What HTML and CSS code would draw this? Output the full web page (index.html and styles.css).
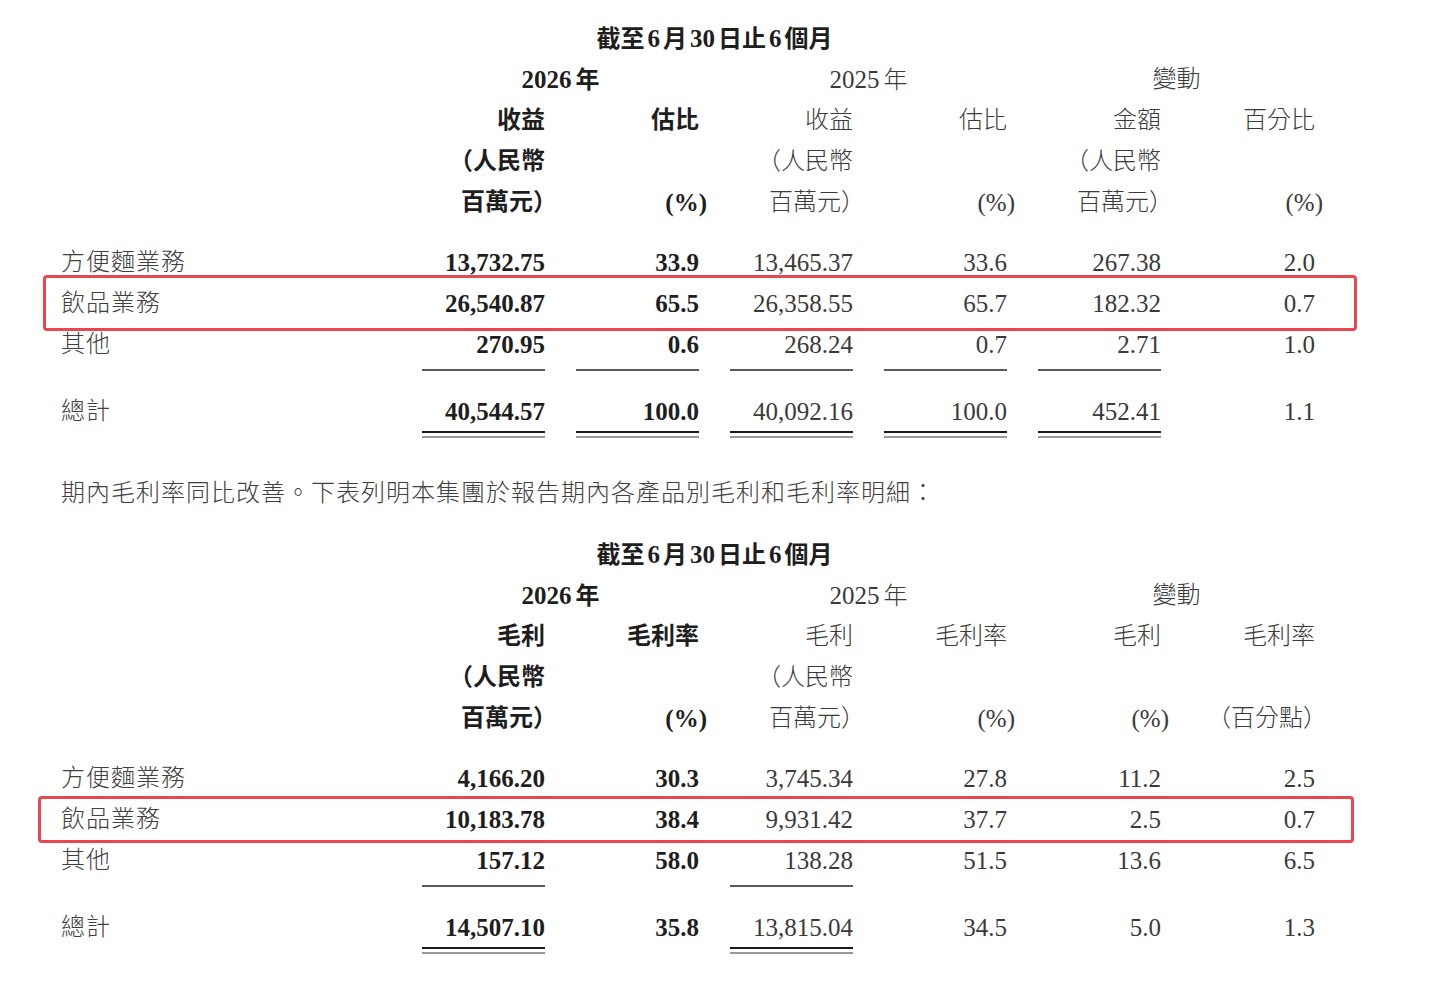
FILE: index.html
```html
<!DOCTYPE html>
<html lang="zh-Hant">
<head>
<meta charset="utf-8">
<title>收益及毛利明細</title>
<link rel="stylesheet" href="styles.css">
</head>
<body>
<div class="page">
  <section class="tbl t1">
    <div class="row"><div></div><div class="title">截至<span class="d">6</span>月<span class="d">30</span>日止<span class="d">6</span>個月</div></div>
    <div class="row"><div></div><div class="yr b"><span class="num y">2026</span>年</div><div class="yr"><span class="num y">2025</span>年</div><div class="yr">變動</div></div>
    <div class="row"><div></div><div class="c b">收益</div><div class="c b">估比</div><div class="c">收益</div><div class="c">估比</div><div class="c">金額</div><div class="c">百分比</div></div>
    <div class="row"><div></div><div class="c b halt">（人民幣</div><div></div><div class="c halt">（人民幣</div><div></div><div class="c halt">（人民幣</div><div></div></div>
    <div class="row"><div></div><div class="c b halt">百萬元）</div><div class="c b num"><span class="pct">(%)</span></div><div class="c halt">百萬元）</div><div class="c num"><span class="pct">(%)</span></div><div class="c halt">百萬元）</div><div class="c num"><span class="pct">(%)</span></div></div>
    <div class="gap"></div>
    <div class="row"><div class="lbl">方便麵業務</div><div class="c b num">13,732.75</div><div class="c b num">33.9</div><div class="c num">13,465.37</div><div class="c num">33.6</div><div class="c num">267.38</div><div class="c num">2.0</div></div>
    <div class="row hl hl1"><div class="lbl">飲品業務</div><div class="c b num">26,540.87</div><div class="c b num">65.5</div><div class="c num">26,358.55</div><div class="c num">65.7</div><div class="c num">182.32</div><div class="c num">0.7</div></div>
    <div class="row"><div class="lbl">其他</div><div class="c b num">270.95</div><div class="c b num">0.6</div><div class="c num">268.24</div><div class="c num">0.7</div><div class="c num">2.71</div><div class="c num">1.0</div></div>
    <div class="rules"><div></div><div class="ln"></div><div class="ln"></div><div class="ln"></div><div class="ln"></div><div class="ln"></div><div></div></div>
    <div class="row"><div class="lbl">總計</div><div class="c b num">40,544.57</div><div class="c b num">100.0</div><div class="c num">40,092.16</div><div class="c num">100.0</div><div class="c num">452.41</div><div class="c num">1.1</div></div>
    <div class="dbls"><div></div><div class="dbl"></div><div class="dbl"></div><div class="dbl"></div><div class="dbl"></div><div class="dbl"></div><div></div></div>
  </section>

  <p class="note">期內毛利率同比改善。下表列明本集團於報告期內各產品別毛利和毛利率明細：</p>

  <section class="tbl t2">
    <div class="row"><div></div><div class="title">截至<span class="d">6</span>月<span class="d">30</span>日止<span class="d">6</span>個月</div></div>
    <div class="row"><div></div><div class="yr b"><span class="num y">2026</span>年</div><div class="yr"><span class="num y">2025</span>年</div><div class="yr">變動</div></div>
    <div class="row"><div></div><div class="c b">毛利</div><div class="c b">毛利率</div><div class="c">毛利</div><div class="c">毛利率</div><div class="c">毛利</div><div class="c">毛利率</div></div>
    <div class="row"><div></div><div class="c b halt">（人民幣</div><div></div><div class="c halt">（人民幣</div><div></div><div></div><div></div></div>
    <div class="row"><div></div><div class="c b halt">百萬元）</div><div class="c b num"><span class="pct">(%)</span></div><div class="c halt">百萬元）</div><div class="c num"><span class="pct">(%)</span></div><div class="c num"><span class="pct">(%)</span></div><div class="c halt">（百分點）</div></div>
    <div class="gap"></div>
    <div class="row"><div class="lbl">方便麵業務</div><div class="c b num">4,166.20</div><div class="c b num">30.3</div><div class="c num">3,745.34</div><div class="c num">27.8</div><div class="c num">11.2</div><div class="c num">2.5</div></div>
    <div class="row hl hl2"><div class="lbl">飲品業務</div><div class="c b num">10,183.78</div><div class="c b num">38.4</div><div class="c num">9,931.42</div><div class="c num">37.7</div><div class="c num">2.5</div><div class="c num">0.7</div></div>
    <div class="row"><div class="lbl">其他</div><div class="c b num">157.12</div><div class="c b num">58.0</div><div class="c num">138.28</div><div class="c num">51.5</div><div class="c num">13.6</div><div class="c num">6.5</div></div>
    <div class="rules"><div></div><div class="ln"></div><div></div><div class="ln"></div><div></div><div></div><div></div></div>
    <div class="row"><div class="lbl">總計</div><div class="c b num">14,507.10</div><div class="c b num">35.8</div><div class="c num">13,815.04</div><div class="c num">34.5</div><div class="c num">5.0</div><div class="c num">1.3</div></div>
    <div class="dbls"><div></div><div class="dbl"></div><div></div><div class="dbl"></div><div></div><div></div><div></div></div>
  </section>
</div>
</body>
</html>
```

FILE: styles.css
```css
* { box-sizing: border-box; }
html, body { margin: 0; padding: 0; background: #ffffff; }
body {
  font-family: "Liberation Serif", "Noto Sans CJK TC", serif;
  font-size: 24px;
  font-weight: 300;
  color: #3a3a3a;
}
.page { padding: 17px 0 0 61px; }

.row, .rules, .dbls {
  display: grid;
  grid-template-columns: 330px repeat(6, 154px);
  width: 1254px;
}
.row {
  height: 41px;
  padding-top: 1px;
  line-height: 41px;
  position: relative;
  white-space: nowrap;
}
.c { padding-left: 31px; text-align: right; }
.title {
  grid-column: 2 / 6;
  padding-left: 31px;
  text-align: center;
  font-weight: 700;
  color: #1e1e1e;
}
.title .d { font-size: 25px; margin: 0 3px; }
.yr { grid-column: span 2; padding-left: 31px; text-align: center; }
.y { margin-right: 4px; }
.b { font-weight: 700; color: #1e1e1e; }
.num { font-size: 25px; }
.pct { margin-right: -8px; }
.halt { font-feature-settings: "halt"; }
.lbl { letter-spacing: 1px; color: #404040; }
.gap { height: 19px; }

.rules { height: 26px; }
.ln { margin: 5px 0 0 31px; border-top: 2px solid #5a5a5a; }
.dbls { height: 7px; }
.dbl {
  margin-left: 31px;
  height: 7px;
  border-top: 2px solid #1a1a1a;
  border-bottom: 2px solid #9a9a9a;
}

.note {
  margin: 34px 0 0 0;
  height: 41px;
  padding-top: 1px;
  line-height: 41px;
  letter-spacing: 1px;
  color: #404040;
}
.t2 { margin-top: 20px; }

.hl::after {
  content: "";
  position: absolute;
  border: 3px solid #e8474f;
  border-radius: 4px;
  pointer-events: none;
}
.hl1::after { left: -18px; right: -42px; top: -7px; bottom: -8px; }
.hl2::after { left: -23px; right: -39px; top: -2px; bottom: -4px; }
```
